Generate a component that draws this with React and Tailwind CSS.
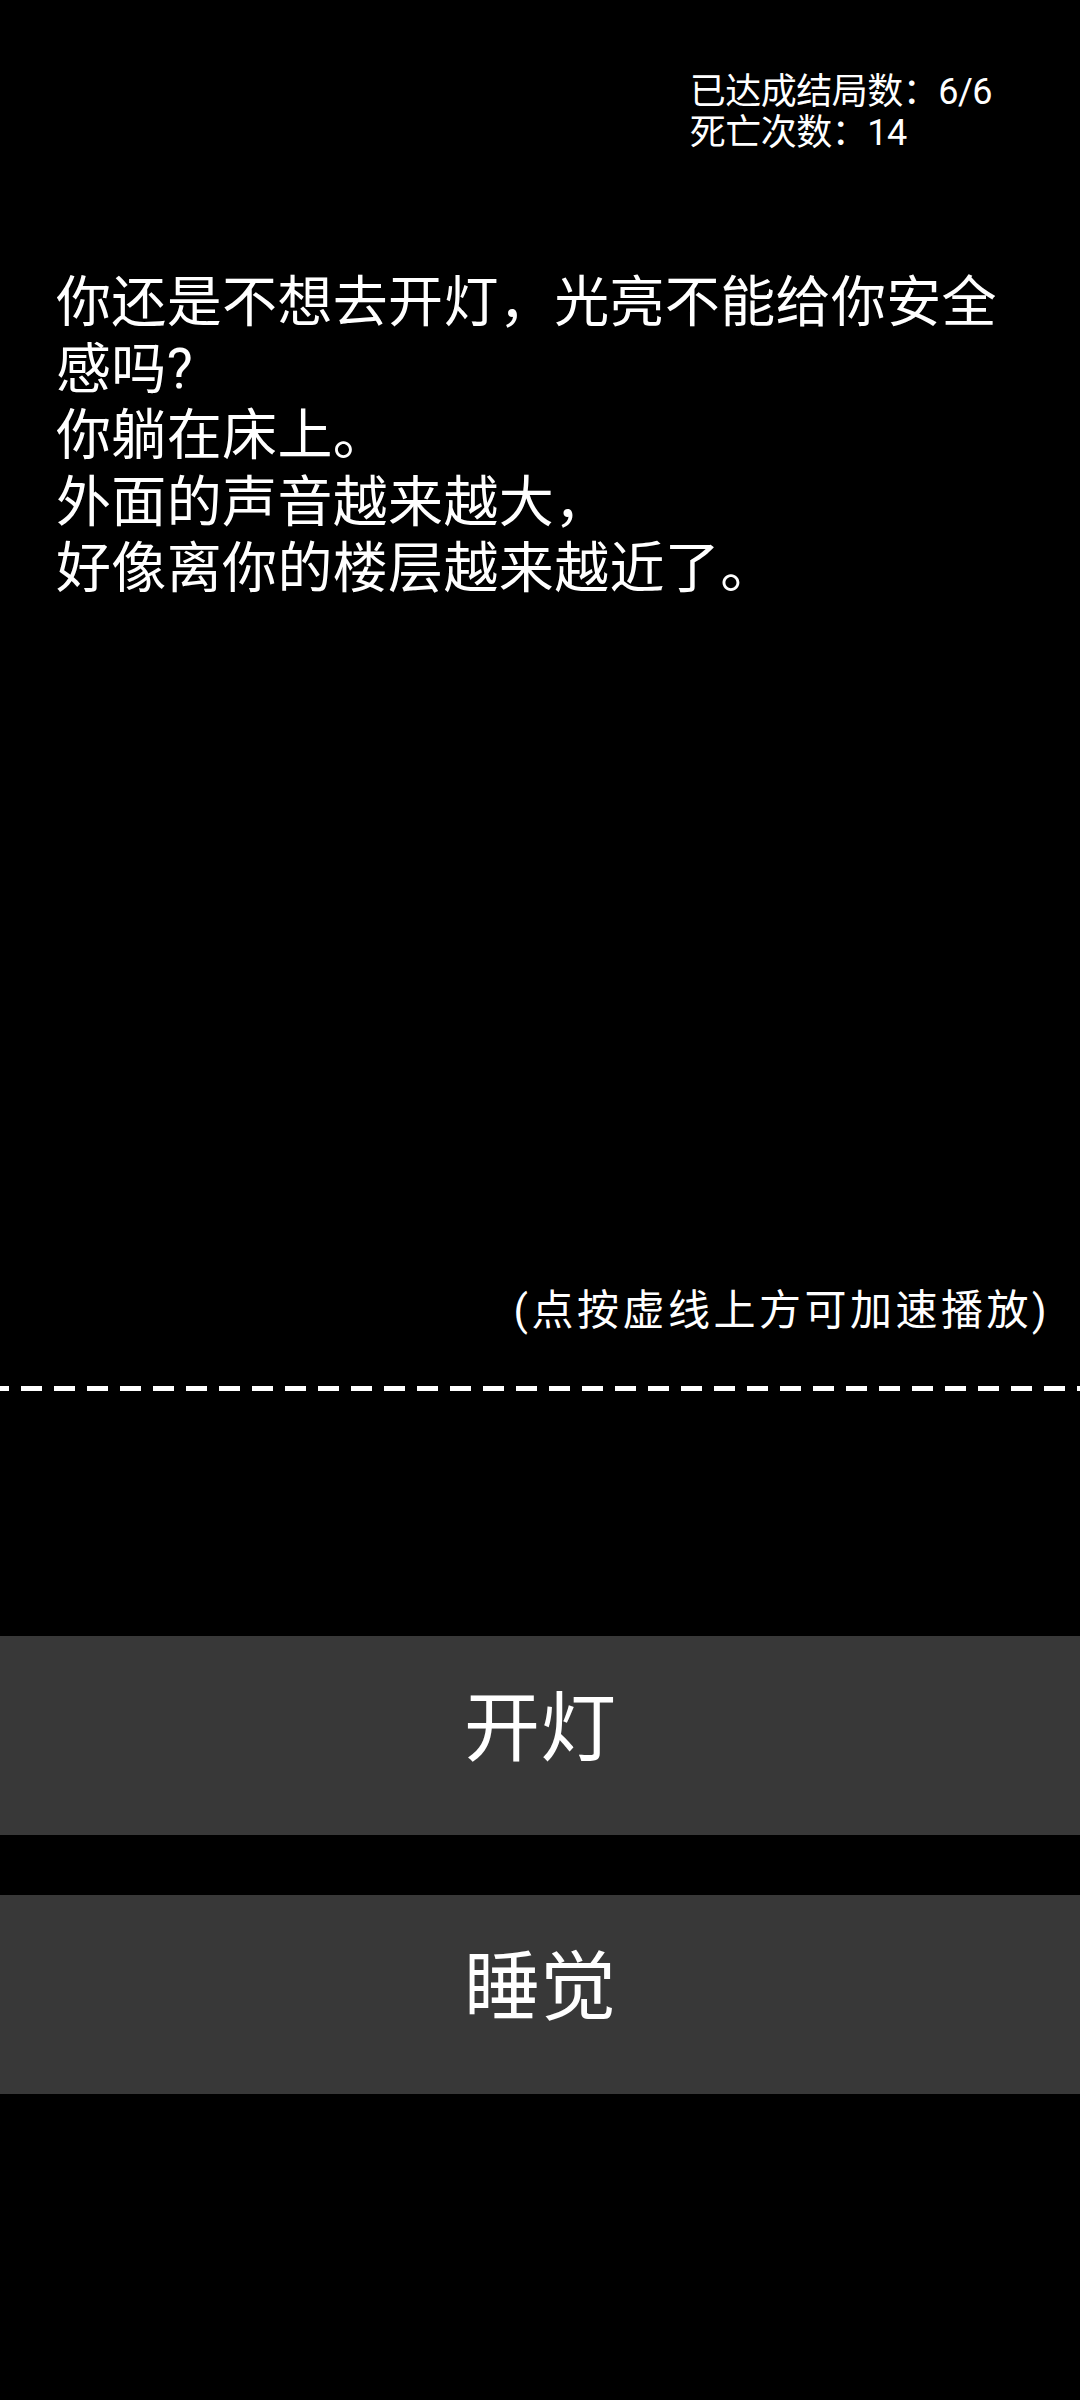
import React from 'react';

const story = [
  '你还是不想去开灯，光亮不能给你安全感吗?',
  '你躺在床上。',
  '外面的声音越来越大，',
  '好像离你的楼层越来越近了。',
];

const choices = ['开灯', '睡觉'];

// dashed divider: 21px dash, 12px gap, 5px thick
const Divider = () => (
  <svg className="block w-full h-[5px]" height="5">
    <line x1="0" y1="2.5" x2="100%" y2="2.5" stroke="#fff" strokeWidth="5" strokeDasharray="21 12" strokeDashoffset="12" />
  </svg>
);

const App = () => {
  return (
    <div className="min-h-[2400px] w-full bg-black text-white font-['Roboto','Noto_Sans_CJK_SC',sans-serif]">
      <div className="flex justify-end pr-[88px] pt-[72px]">
        <div className="text-[36px] leading-[41px] tracking-[-0.5px]">
          <div>已达成结局数：6/6</div>
          <div>死亡次数：14</div>
        </div>
      </div>

      <div className="mt-[115px] px-[56px] text-[55px] leading-[66.5px] tracking-[0.35px]">
        {story.map((line, i) => (
          <p key={i}>{line}</p>
        ))}
      </div>

      <p className="mt-[684px] pr-[30px] text-right text-[42px] leading-[50px] tracking-[3.5px]">(点按虚线上方可加速播放)</p>

      <div className="mt-[50px]">
        <Divider />
      </div>

      <div className="mt-[245px] flex flex-col gap-[60px]">
        {choices.map(c => (
          <button key={c} className="h-[199px] w-full bg-[#383838] flex items-center justify-center pb-[12px] text-[76px] text-white">
            {c}
          </button>
        ))}
      </div>
    </div>
  );
};

export default App;
